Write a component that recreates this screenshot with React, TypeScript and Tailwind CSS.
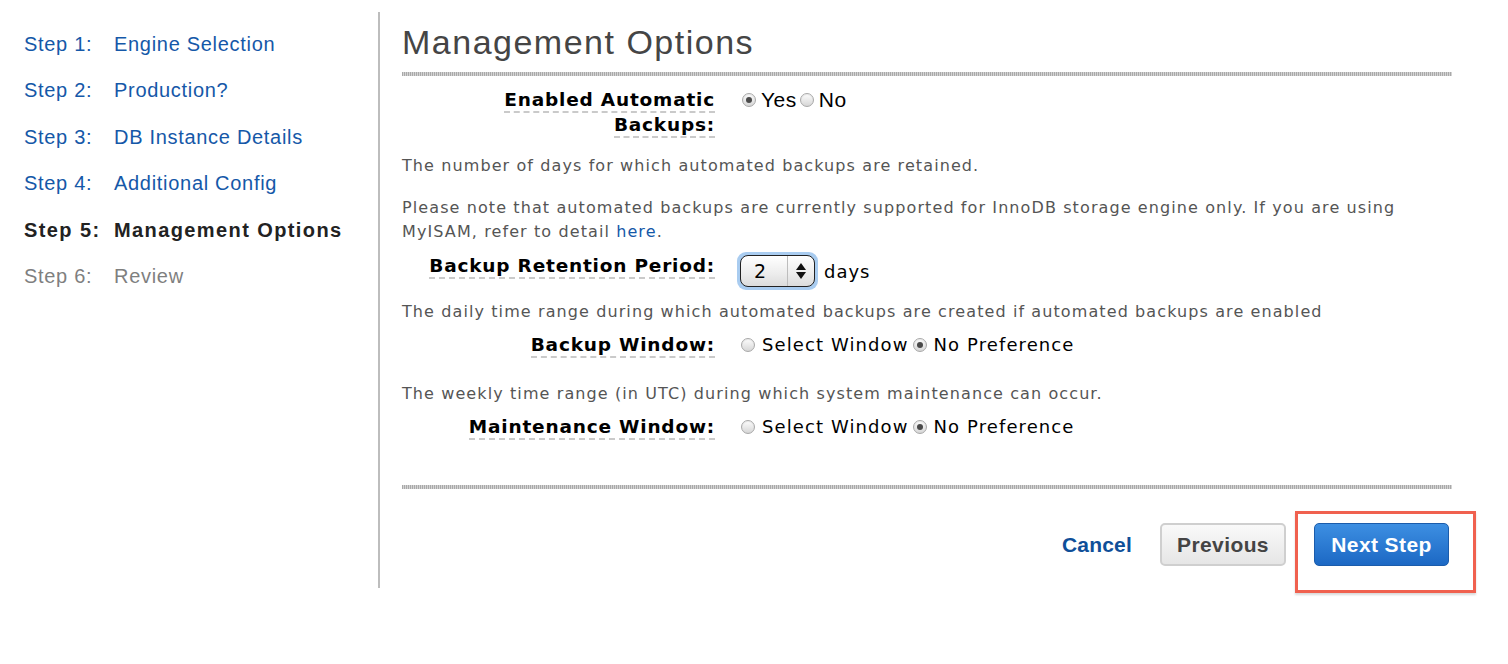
import React from 'react'

const steps = [
  { n: 'Step 1:', label: 'Engine Selection', state: 'link' },
  { n: 'Step 2:', label: 'Production?', state: 'link' },
  { n: 'Step 3:', label: 'DB Instance Details', state: 'link' },
  { n: 'Step 4:', label: 'Additional Config', state: 'link' },
  { n: 'Step 5:', label: 'Management Options', state: 'current' },
  { n: 'Step 6:', label: 'Review', state: 'todo' },
]

const verdana = "font-['Verdana','DejaVu_Sans',sans-serif]"
const helv = "font-['Helvetica','Liberation_Sans',Arial,sans-serif]"

function Radio({ checked }: { checked?: boolean }) {
  return (
    <span className="inline-flex h-[14px] w-[14px] shrink-0 items-center justify-center rounded-full border border-[#a8a8a8] bg-[linear-gradient(#fdfdfd,#d6d6d6)] shadow-[inset_0_1px_1px_rgba(0,0,0,0.08)]">
      {checked && <span className="h-[6px] w-[6px] rounded-full bg-[#4a4a4a]" />}
    </span>
  )
}

function Label({ children }: { children: React.ReactNode }) {
  return (
    <div className={`w-[313px] shrink-0 text-right text-[18.5px] font-bold leading-[25px] tracking-[0.8px] text-black ${verdana}`}>
      <span className="border-b-2 border-dashed border-[#cacaca] pb-[1px]">{children}</span>
    </div>
  )
}

function Rule() {
  return <div className="h-[4px] w-full bg-[repeating-linear-gradient(90deg,#a9a9a9_0px,#a9a9a9_1px,#d4d4d4_1px,#d4d4d4_2px)]" />
}

function WindowChoice() {
  return (
    <div className={`flex items-center gap-[7px] text-[18px] leading-[25px] tracking-[1.1px] text-black ${verdana}`}>
      <Radio />
      <span className="mr-[-3px]">Select Window</span>
      <Radio checked />
      <span>No Preference</span>
    </div>
  )
}

const desc = `text-[16px] leading-[24px] tracking-[1.1px] text-[#555] ${verdana}`

export default function App() {
  return (
    <div className="h-[664px] w-[1508px] bg-white">
      <div className="flex pt-3">
        <nav className={`h-[576px] w-[380px] shrink-0 border-r-2 border-[#bdbdbd] pl-6 pt-[18px] ${helv}`}>
          {steps.map((s) => (
            <div
              key={s.n}
              className={`flex h-[46.4px] items-start text-[20px] leading-[28px] ${
                s.state === 'current'
                  ? 'font-bold tracking-[1.4px] text-[#222]'
                  : s.state === 'todo'
                    ? 'tracking-[0.7px] text-[#7f7f7f]'
                    : 'tracking-[0.7px] text-[#1558a8]'
              }`}
            >
              <span className="w-[90px]">{s.n}</span>
              <span>{s.label}</span>
            </div>
          ))}
        </nav>

        <main className="w-[1072px] pl-[22px] pt-[10px]">
          <h1 className={`text-[34px] leading-[40px] tracking-[1.5px] text-[#454545] ${helv}`}>Management Options</h1>
          <div className="mt-[10px]">
            <Rule />
          </div>

          <div className="mt-[11px] flex items-start gap-[27px]">
            <Label>
              Enabled Automatic
              <br />
              Backups:
            </Label>
            <div className={`flex items-center gap-[5px] text-[21px] leading-[25px] tracking-[0.5px] text-black ${helv}`}>
              <Radio checked />
              <span className="mr-[-2px]">Yes</span>
              <Radio />
              <span>No</span>
            </div>
          </div>

          <p className={`mt-[17px] ${desc}`}>The number of days for which automated backups are retained.</p>
          <p className={`mt-[18px] ${desc}`}>
            Please note that automated backups are currently supported for InnoDB storage engine only. If you are using
            <br />
            MyISAM, refer to detail <a className="text-[#1558a8]">here</a>.
          </p>

          <div className="mt-[8px] flex items-start gap-[22px]">
            <div className="mt-[1px]">
              <Label>Backup Retention Period:</Label>
            </div>
            <div className="flex items-center gap-[6px]">
              <div className="rounded-[9px] bg-[#a9ccf0] p-[3px]">
                <div className="flex h-[32px] w-[75px] items-stretch overflow-hidden rounded-[8px] border-[1.5px] border-[#222] bg-[linear-gradient(#ffffff,#ececec_60%,#dcdcdc)]">
                  <span className={`flex flex-1 items-center pl-[13px] text-[19px] text-black ${verdana}`}>2</span>
                  <span className="flex w-[27px] flex-col items-center justify-center gap-[2px] border-l border-[#bdbdbd]">
                    <svg width="10" height="7" viewBox="0 0 10 7"><path d="M5 0L10 7H0Z" fill="#111" /></svg>
                    <svg width="10" height="7" viewBox="0 0 10 7"><path d="M0 0H10L5 7Z" fill="#111" /></svg>
                  </span>
                </div>
              </div>
              <span className={`text-[18px] tracking-[1px] text-black ${verdana}`}>days</span>
            </div>
          </div>

          <p className={`mt-[10px] ${desc}`}>
            The daily time range during which automated backups are created if automated backups are enabled
          </p>
          <div className="mt-[8px] flex items-center gap-[26px]">
            <Label>Backup Window:</Label>
            <WindowChoice />
          </div>

          <p className={`mt-[25px] ${desc}`}>The weekly time range (in UTC) during which system maintenance can occur.</p>
          <div className="mt-[8px] flex items-center gap-[26px]">
            <Label>Maintenance Window:</Label>
            <WindowChoice />
          </div>

          <div className="mt-[46px]">
            <Rule />
          </div>

          <div className={`mt-[34px] flex items-center justify-end gap-[28px] pr-[3px] ${helv}`}>
            <a className="text-[21px] font-bold tracking-[0.2px] text-[#0f4f99]">Cancel</a>
            <button className="h-[43px] w-[126px] rounded-[5px] border-2 border-[#cfcfcf] bg-[linear-gradient(#f9f9f9,#e6e6e6)] text-[21px] font-bold tracking-[0.4px] text-[#444]">
              Previous
            </button>
            <div className="relative">
              <span className="pointer-events-none absolute -left-[19px] -top-[12px] h-[82px] w-[181px] border-[3px] border-[#f0614f] shadow-[0_2px_2px_rgba(0,0,0,0.15)]" />
              <button className="h-[43px] w-[135px] rounded-[5px] border border-[#1b5cab] bg-[linear-gradient(#3d8fe2,#1c68c4)] text-[21px] font-bold tracking-[0.4px] text-white">
                Next Step
              </button>
            </div>
          </div>
        </main>
      </div>
    </div>
  )
}
